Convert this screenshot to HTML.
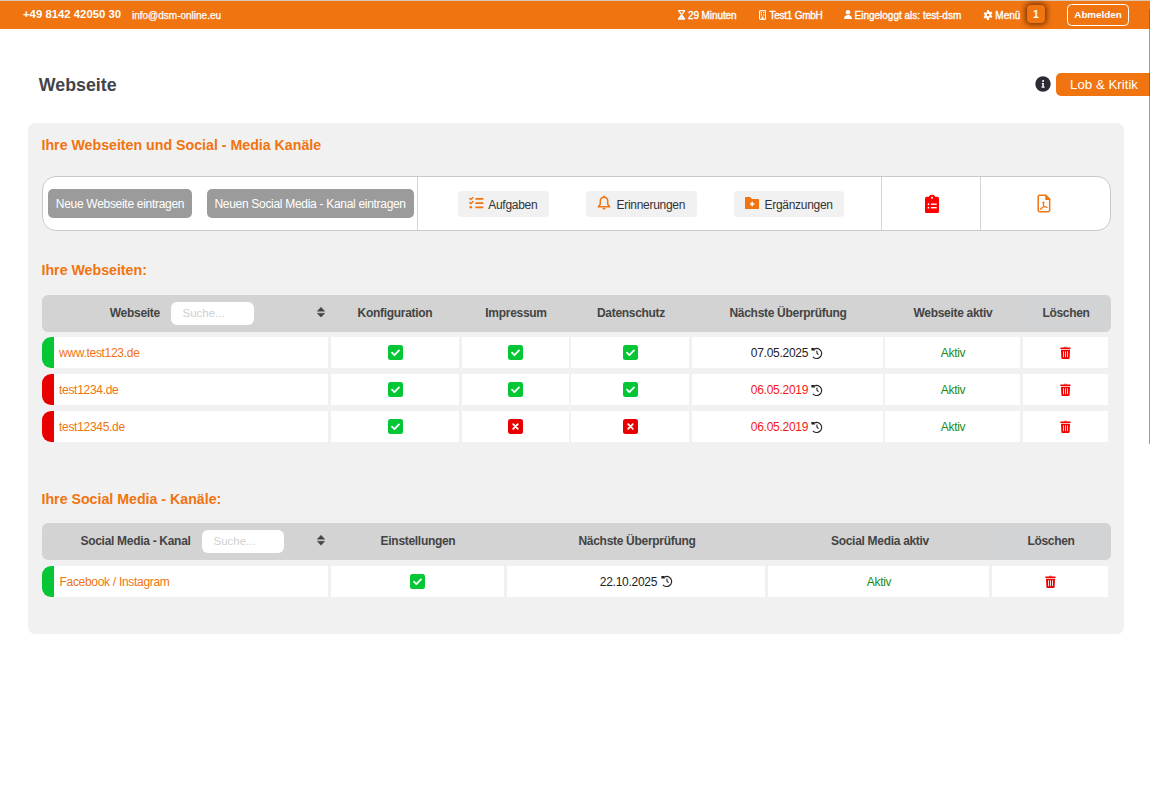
<!DOCTYPE html>
<html><head><meta charset="utf-8">
<style>
*{box-sizing:border-box}
html,body{margin:0;padding:0}
body{width:1150px;height:812px;overflow:hidden;background:#fff;position:relative;font-family:"Liberation Sans",sans-serif;}
.a{position:absolute}
.t{position:absolute;white-space:nowrap;line-height:20px;height:20px}
svg{display:block}
#topline{left:0;top:0;width:1150px;height:1px;background:#d8c8b8}
#hdr{left:0;top:1px;width:1150px;height:28px;background:#f07410}
.hw{color:#fff;font-size:10px;-webkit-text-stroke:0.35px #fff}
.panel{left:28px;top:123px;width:1096px;height:511px;background:#f1f1f1;border-radius:7px}
.or{color:#f07410;font-weight:bold;font-size:14.2px}
.tb{left:41.5px;top:176px;width:1069px;height:54.5px;background:#fff;border:1px solid #c9c9c9;border-radius:14px}
.gbtn{height:29px;top:189px;background:#9b9b9b;border-radius:5px;color:#fff;font-size:12px;letter-spacing:-0.3px;line-height:30px;text-align:center;white-space:nowrap}
.lbtn{height:26px;top:191px;background:#f1f1f1;border-radius:4px;color:#333;font-size:11.3px;line-height:26px;white-space:nowrap}
.vd{top:177px;width:1px;height:52.5px;background:#d4d4d4}
.th{left:41.5px;width:1069px;background:#d3d3d3;border-radius:6px;overflow:hidden}
.thl{background:#d2d3d5;top:0;bottom:0;right:0}
.hc{font-weight:bold;font-size:12px;letter-spacing:-0.3px;color:#444;text-align:center}
.srch{background:#fff;border-radius:6px;color:#cfcfcf;font-size:11.5px;line-height:23px;padding-left:12px;white-space:nowrap}
.cell{background:#fff;height:31px}
.bar{width:12px;height:31px;border-radius:9px 0 0 9px}
.lnk{color:#f07410;font-size:12px;letter-spacing:-0.3px}
.dt{color:#222;font-size:12px;letter-spacing:-0.27px}
.rd{color:#f31818}
.akt{color:#188c18;font-size:12px;letter-spacing:-0.3px;text-align:center}
</style></head><body>
<div id="topline" class="a"></div>
<div id="hdr" class="a"></div>
<div class="t" style="left:23px;top:4px;color:#fff;font-weight:bold;font-size:11.35px;line-height:20px">+49 8142 42050 30</div>
<div class="t" style="left:132px;top:5.7px;color:#fff;font-size:10px;-webkit-text-stroke:0.25px #fff">info@dsm-online.eu</div>

<!-- header right -->
<svg class="a" style="left:677.7px;top:10px" width="7.3" height="9.7" viewBox="0 0 7.6 9.7" preserveAspectRatio="none"><path d="M0 0h7.6v1.1L4.5 4.85 7.6 8.6v1.1H0V8.6L3.1 4.85 0 1.1z" fill="#fff"/><path d="M1.6 1.2h4.4L3.8 3.8z" fill="#f07410"/><circle cx="3.8" cy="7.2" r=".45" fill="#f07410"/></svg>
<div class="t hw" style="left:688px;top:5.5px;letter-spacing:-0.1px">29 Minuten</div>
<svg class="a" style="left:758.8px;top:10px" width="7.1" height="9.9" viewBox="0 0 8 10" preserveAspectRatio="none"><rect x="0.6" y="0.6" width="6.8" height="8.8" rx="1" fill="none" stroke="#fff" stroke-width="1.2"/><rect x="2" y="2" width="1.4" height="1.3" fill="#fff"/><rect x="4.6" y="2" width="1.4" height="1.3" fill="#fff"/><rect x="2" y="4.2" width="1.4" height="1.3" fill="#fff"/><rect x="4.6" y="4.2" width="1.4" height="1.3" fill="#fff"/><rect x="3" y="6.6" width="2" height="2.8" fill="#fff"/></svg>
<div class="t hw" style="left:769.5px;top:5.5px;letter-spacing:-0.25px">Test1 GmbH</div>
<svg class="a" style="left:844px;top:10px" width="8" height="9" viewBox="0 0 8 9"><circle cx="4" cy="2.3" r="2.3" fill="#fff"/><path d="M0 9c0-2.6 1.6-4 4-4s4 1.4 4 4z" fill="#fff"/></svg>
<div class="t hw" style="left:854.5px;top:5.5px">Eingeloggt als: test-dsm</div>
<svg class="a" style="left:983px;top:10px" width="10" height="10" viewBox="0 0 16 16"><path fill="#fff" fill-rule="evenodd" d="M9.5 0l.4 2.3c.6.2 1.1.5 1.5.9l2.2-.8 1.5 2.6-1.8 1.5c.1.6.1 1.2 0 1.8l1.8 1.5-1.5 2.6-2.2-.8c-.4.4-.9.7-1.5.9L9.5 16h-3l-.4-2.3c-.6-.2-1.1-.5-1.5-.9l-2.2.8L.9 11l1.8-1.5c-.1-.6-.1-1.2 0-1.8L.9 6.2 2.4 3.6l2.2.8c.4-.4.9-.7 1.5-.9L6.5 0zM8 5.9A2.1 2.1 0 1 0 8 10.1 2.1 2.1 0 1 0 8 5.9z"/></svg>
<div class="t hw" style="left:995.3px;top:5.5px">Menü</div>
<div class="a" style="left:1027px;top:5px;width:18px;height:18px;background:#f07410;border-radius:4px;box-shadow:0 0 5px 2px rgba(70,25,0,.65);color:#fff;font-weight:bold;font-size:10.5px;line-height:18px;text-align:center">1</div>
<div class="a" style="left:1067px;top:4px;width:62px;height:21.5px;border:1.6px solid #fff;border-radius:4.5px;color:#fff;font-weight:bold;font-size:9.8px;line-height:18px;padding-top:1.2px;text-align:center">Abmelden</div>

<!-- title -->
<div class="t" style="left:38.8px;top:74.6px;font-weight:bold;font-size:17.8px;color:#42444a">Webseite</div>
<svg class="a" style="left:1034.8px;top:75.8px" width="16" height="16" viewBox="0 0 16 16"><circle cx="8" cy="8" r="7.7" fill="#2b2c33"/><circle cx="8.1" cy="5" r="1.05" fill="#fff"/><path d="M6.8 7h2v3.5h.8v1.2H6.5v-1.2h.8V8.1h-.5z" fill="#fff"/></svg>
<div class="a" style="left:1056px;top:73px;width:94px;height:23px;background:#f07410;border-radius:5px 0 0 5px;color:#fff;font-size:13.3px;line-height:23px;padding-left:14px;white-space:nowrap">Lob &amp; Kritik</div>
<div class="a" style="left:1149px;top:9px;width:1px;height:435px;background:rgba(90,90,90,.6)"></div>

<!-- panel -->
<div class="a panel"></div>
<div class="t or" style="left:41.5px;top:135px">Ihre Webseiten und Social - Media Kanäle</div>

<!-- toolbar -->
<div class="a tb"></div>
<div class="a gbtn" style="left:48px;width:144px">Neue Webseite eintragen</div>
<div class="a gbtn" style="left:206.5px;width:207.2px">Neuen Social Media - Kanal eintragen</div>
<div class="a vd" style="left:417px"></div>
<div class="a lbtn" style="left:458px;width:91px"></div>
<div class="a lbtn" style="left:586px;width:110.5px"></div>
<div class="a lbtn" style="left:734px;width:110px"></div>
<div class="t" style="left:488.3px;top:194.5px;color:#333;font-size:12px;letter-spacing:-0.3px">Aufgaben</div>
<div class="t" style="left:616.6px;top:194.5px;color:#333;font-size:12px;letter-spacing:-0.3px">Erinnerungen</div>
<div class="t" style="left:764.6px;top:194.5px;color:#333;font-size:12px;letter-spacing:-0.3px">Ergänzungen</div>
<!-- list-check icon -->
<svg class="a" style="left:468.5px;top:197px" width="15" height="12" viewBox="0 0 15 12"><path d="M0.7 1.5l1.2 1.1 2-2.2M0.7 5.6l1.2 1.1 2-2.2" fill="none" stroke="#f07410" stroke-width="1.4" stroke-linecap="round" stroke-linejoin="round"/><circle cx="1.8" cy="10.2" r="1.3" fill="#f07410"/><rect x="6.3" y="0.9" width="8.2" height="1.8" rx=".6" fill="#f07410"/><rect x="6.3" y="5.2" width="8.2" height="1.8" rx=".6" fill="#f07410"/><rect x="6.3" y="9.4" width="8.2" height="1.8" rx=".6" fill="#f07410"/></svg>
<!-- bell -->
<svg class="a" style="left:596.8px;top:195.2px" width="14" height="15" viewBox="0 0 14 15"><rect x="6.2" y="0.4" width="1.6" height="2" rx=".7" fill="#f07410"/><path d="M7 2.2C4.8 2.2 3.3 3.9 3.3 6.1v3.2L1.3 11.7h11.4L10.7 9.3V6.1C10.7 3.9 9.2 2.2 7 2.2z" fill="none" stroke="#f07410" stroke-width="1.5" stroke-linejoin="round"/><ellipse cx="7" cy="13.6" rx="1.6" ry=".9" fill="#f07410"/></svg>
<!-- folder plus -->
<svg class="a" style="left:744.8px;top:196.9px" width="14" height="12.5" viewBox="0 0 14 12.5"><path d="M0 1C0 .4.4 0 1 0h4.2l1.8 1.9h6c.6 0 1 .4 1 1v8.6c0 .6-.4 1-1 1H1c-.6 0-1-.4-1-1z" fill="#f07410"/><path d="M7.2 4.8v4.4M5 7h4.4" stroke="#fff" stroke-width="1.5"/></svg>
<div class="a vd" style="left:881px"></div>
<div class="a vd" style="left:980px"></div>
<!-- clipboard list -->
<svg class="a" style="left:925px;top:194px" width="14" height="19" viewBox="0 0 14 19"><circle cx="7" cy="3.9" r="3.2" fill="#f00"/><rect x="0" y="2.8" width="14" height="16.2" rx="1.6" fill="#f00"/><circle cx="7" cy="3.8" r="1" fill="#fff"/><circle cx="3.5" cy="10.2" r=".85" fill="#fff"/><circle cx="3.5" cy="13.7" r=".85" fill="#fff"/><rect x="5.9" y="9.5" width="5.8" height="1.4" fill="#fff"/><rect x="5.9" y="13" width="5.8" height="1.4" fill="#fff"/></svg>
<!-- pdf -->
<svg class="a" style="left:1036.9px;top:194px" width="14" height="19" viewBox="0 0 14 19"><path d="M2.6 1.15h6.2l3.85 3.9v11.3c0 .8-.6 1.4-1.4 1.4H2.6c-.8 0-1.4-.6-1.4-1.4V2.55c0-.8.6-1.4 1.4-1.4z" fill="none" stroke="#f07410" stroke-width="1.5"/><path d="M8.3 1.1h.8l4.2 4.3v.6H8.3z" fill="#f07410"/><circle cx="6.4" cy="8.6" r="1.1" fill="#f07410"/><path d="M6.4 8.8l.3 3.6M6.7 12.4L3.2 15.4M6.7 12.4l3.4 0.9" fill="none" stroke="#f07410" stroke-width="1.3" stroke-linecap="round"/></svg>

<!-- Ihre Webseiten -->
<div class="t or" style="left:41.5px;top:260px">Ihre Webseiten:</div>
<div class="a th" style="top:295px;height:36.5px"><div class="a thl" style="left:981px"></div></div>
<div class="t hc" style="left:109.8px;top:303px">Webseite</div>
<div class="a srch" style="left:171px;top:302px;width:83px;height:23px;padding-left:11.5px">Suche...</div>
<svg class="a" style="left:317px;top:306.5px" width="8" height="10.5" viewBox="0 0 8 10.5"><path d="M4 0.2L7.8 4.3H0.2zM4 10.3L7.8 6.2H0.2z" fill="#444" stroke="#444" stroke-width=".4" stroke-linejoin="round"/></svg>
<div class="t hc" style="left:335px;width:120px;top:303px">Konfiguration</div>
<div class="t hc" style="left:456px;width:120px;top:303px">Impressum</div>
<div class="t hc" style="left:571px;width:120px;top:303px">Datenschutz</div>
<div class="t hc" style="left:688px;width:200px;top:303px">Nächste Überprüfung</div>
<div class="t hc" style="left:853px;width:200px;top:303px">Webseite aktiv</div>
<div class="t hc" style="left:1006px;width:120px;top:303px">Löschen</div>

<div class="a cell" style="left:42px;top:337px;width:286px;border-radius:9px 0 0 9px"></div>
<div class="a cell" style="left:331px;top:337px;width:128px"></div>
<div class="a cell" style="left:462px;top:337px;width:107px"></div>
<div class="a cell" style="left:571px;top:337px;width:118px"></div>
<div class="a cell" style="left:692px;top:337px;width:191px"></div>
<div class="a cell" style="left:885px;top:337px;width:135px"></div>
<div class="a cell" style="left:1023px;top:337px;width:85px"></div>
<div class="a bar" style="left:42px;top:337px;background:#05c634"></div>
<div class="t lnk" style="left:59px;top:343px">www.test123.de</div>
<svg class="a" style="left:387.5px;top:345px" width="15" height="15" viewBox="0 0 15 15"><rect width="15" height="15" rx="2.5" fill="#05c634"/><path d="M4 7.7l2.4 2.4L11 5.4" fill="none" stroke="#fff" stroke-width="1.8" stroke-linecap="round" stroke-linejoin="round"/></svg>
<svg class="a" style="left:507.5px;top:345px" width="15" height="15" viewBox="0 0 15 15"><rect width="15" height="15" rx="2.5" fill="#05c634"/><path d="M4 7.7l2.4 2.4L11 5.4" fill="none" stroke="#fff" stroke-width="1.8" stroke-linecap="round" stroke-linejoin="round"/></svg>
<svg class="a" style="left:622.5px;top:345px" width="15" height="15" viewBox="0 0 15 15"><rect width="15" height="15" rx="2.5" fill="#05c634"/><path d="M4 7.7l2.4 2.4L11 5.4" fill="none" stroke="#fff" stroke-width="1.8" stroke-linecap="round" stroke-linejoin="round"/></svg>
<div class="t dt" style="left:750.8px;top:343px">07.05.2025</div>
<svg class="a" style="left:811px;top:346.5px" width="12" height="12" viewBox="0 0 12 12"><path d="M3.4 1.9A5 5 0 1 1 1.9 9.8" fill="none" stroke="#222" stroke-width="1.25"/><path d="M0.4 0.9h2.6l1.2 2.6H0.4z" fill="#222"/><path d="M5.8 3.6l.3 2.9 1.5 1.1" fill="none" stroke="#222" stroke-width="1.1"/></svg>
<div class="t akt" style="left:903px;width:100px;top:343px">Aktiv</div>
<svg class="a" style="left:1060px;top:346px" width="11" height="13" viewBox="0 0 11 13"><path d="M3.6 1.6C3.9 1 4.5.8 5.5.8s1.6.2 1.9.8z" fill="#ee0000"/><rect x="0.3" y="1.5" width="10.3" height="1.5" rx=".6" fill="#ee0000"/><path d="M1 3.8h9l-.4 8.2c0 .5-.4.9-.9.9H2.3c-.5 0-.9-.4-.9-.9z" fill="#ee0000"/><path d="M3.5 5.3v5.9M5.5 5.3v5.9M7.5 5.3v5.9" stroke="#fff" stroke-width=".85"/></svg>
<div class="a cell" style="left:42px;top:374px;width:286px;border-radius:9px 0 0 9px"></div>
<div class="a cell" style="left:331px;top:374px;width:128px"></div>
<div class="a cell" style="left:462px;top:374px;width:107px"></div>
<div class="a cell" style="left:571px;top:374px;width:118px"></div>
<div class="a cell" style="left:692px;top:374px;width:191px"></div>
<div class="a cell" style="left:885px;top:374px;width:135px"></div>
<div class="a cell" style="left:1023px;top:374px;width:85px"></div>
<div class="a bar" style="left:42px;top:374px;background:#e80000"></div>
<div class="t lnk" style="left:59px;top:380px">test1234.de</div>
<svg class="a" style="left:387.5px;top:382px" width="15" height="15" viewBox="0 0 15 15"><rect width="15" height="15" rx="2.5" fill="#05c634"/><path d="M4 7.7l2.4 2.4L11 5.4" fill="none" stroke="#fff" stroke-width="1.8" stroke-linecap="round" stroke-linejoin="round"/></svg>
<svg class="a" style="left:507.5px;top:382px" width="15" height="15" viewBox="0 0 15 15"><rect width="15" height="15" rx="2.5" fill="#05c634"/><path d="M4 7.7l2.4 2.4L11 5.4" fill="none" stroke="#fff" stroke-width="1.8" stroke-linecap="round" stroke-linejoin="round"/></svg>
<svg class="a" style="left:622.5px;top:382px" width="15" height="15" viewBox="0 0 15 15"><rect width="15" height="15" rx="2.5" fill="#05c634"/><path d="M4 7.7l2.4 2.4L11 5.4" fill="none" stroke="#fff" stroke-width="1.8" stroke-linecap="round" stroke-linejoin="round"/></svg>
<div class="t dt rd" style="left:750.8px;top:380px">06.05.2019</div>
<svg class="a" style="left:811px;top:383.5px" width="12" height="12" viewBox="0 0 12 12"><path d="M3.4 1.9A5 5 0 1 1 1.9 9.8" fill="none" stroke="#222" stroke-width="1.25"/><path d="M0.4 0.9h2.6l1.2 2.6H0.4z" fill="#222"/><path d="M5.8 3.6l.3 2.9 1.5 1.1" fill="none" stroke="#222" stroke-width="1.1"/></svg>
<div class="t akt" style="left:903px;width:100px;top:380px">Aktiv</div>
<svg class="a" style="left:1060px;top:383px" width="11" height="13" viewBox="0 0 11 13"><path d="M3.6 1.6C3.9 1 4.5.8 5.5.8s1.6.2 1.9.8z" fill="#ee0000"/><rect x="0.3" y="1.5" width="10.3" height="1.5" rx=".6" fill="#ee0000"/><path d="M1 3.8h9l-.4 8.2c0 .5-.4.9-.9.9H2.3c-.5 0-.9-.4-.9-.9z" fill="#ee0000"/><path d="M3.5 5.3v5.9M5.5 5.3v5.9M7.5 5.3v5.9" stroke="#fff" stroke-width=".85"/></svg>
<div class="a cell" style="left:42px;top:411px;width:286px;border-radius:9px 0 0 9px"></div>
<div class="a cell" style="left:331px;top:411px;width:128px"></div>
<div class="a cell" style="left:462px;top:411px;width:107px"></div>
<div class="a cell" style="left:571px;top:411px;width:118px"></div>
<div class="a cell" style="left:692px;top:411px;width:191px"></div>
<div class="a cell" style="left:885px;top:411px;width:135px"></div>
<div class="a cell" style="left:1023px;top:411px;width:85px"></div>
<div class="a bar" style="left:42px;top:411px;background:#e80000"></div>
<div class="t lnk" style="left:59px;top:417px">test12345.de</div>
<svg class="a" style="left:387.5px;top:419px" width="15" height="15" viewBox="0 0 15 15"><rect width="15" height="15" rx="2.5" fill="#05c634"/><path d="M4 7.7l2.4 2.4L11 5.4" fill="none" stroke="#fff" stroke-width="1.8" stroke-linecap="round" stroke-linejoin="round"/></svg>
<svg class="a" style="left:507.5px;top:419px" width="15" height="15" viewBox="0 0 15 15"><rect width="15" height="15" rx="2.5" fill="#e80000"/><path d="M5.2 5.2l4.6 4.6M9.8 5.2l-4.6 4.6" fill="none" stroke="#fff" stroke-width="1.8" stroke-linecap="round"/></svg>
<svg class="a" style="left:622.5px;top:419px" width="15" height="15" viewBox="0 0 15 15"><rect width="15" height="15" rx="2.5" fill="#e80000"/><path d="M5.2 5.2l4.6 4.6M9.8 5.2l-4.6 4.6" fill="none" stroke="#fff" stroke-width="1.8" stroke-linecap="round"/></svg>
<div class="t dt rd" style="left:750.8px;top:417px">06.05.2019</div>
<svg class="a" style="left:811px;top:420.5px" width="12" height="12" viewBox="0 0 12 12"><path d="M3.4 1.9A5 5 0 1 1 1.9 9.8" fill="none" stroke="#222" stroke-width="1.25"/><path d="M0.4 0.9h2.6l1.2 2.6H0.4z" fill="#222"/><path d="M5.8 3.6l.3 2.9 1.5 1.1" fill="none" stroke="#222" stroke-width="1.1"/></svg>
<div class="t akt" style="left:903px;width:100px;top:417px">Aktiv</div>
<svg class="a" style="left:1060px;top:420px" width="11" height="13" viewBox="0 0 11 13"><path d="M3.6 1.6C3.9 1 4.5.8 5.5.8s1.6.2 1.9.8z" fill="#ee0000"/><rect x="0.3" y="1.5" width="10.3" height="1.5" rx=".6" fill="#ee0000"/><path d="M1 3.8h9l-.4 8.2c0 .5-.4.9-.9.9H2.3c-.5 0-.9-.4-.9-.9z" fill="#ee0000"/><path d="M3.5 5.3v5.9M5.5 5.3v5.9M7.5 5.3v5.9" stroke="#fff" stroke-width=".85"/></svg>

<!-- Social -->
<div class="t or" style="left:41.5px;top:489px">Ihre Social Media - Kanäle:</div>
<div class="a th" style="top:523px;height:36.5px"><div class="a thl" style="left:952px"></div></div>
<div class="t hc" style="left:80.5px;top:531px">Social Media - Kanal</div>
<div class="a srch" style="left:201.5px;top:530px;width:82.5px;height:22.5px;line-height:22.5px">Suche...</div>
<svg class="a" style="left:317px;top:535px" width="8" height="10.5" viewBox="0 0 8 10.5"><path d="M4 0.2L7.8 4.3H0.2zM4 10.3L7.8 6.2H0.2z" fill="#444" stroke="#444" stroke-width=".4" stroke-linejoin="round"/></svg>
<div class="t hc" style="left:358px;width:120px;top:531px">Einstellungen</div>
<div class="t hc" style="left:537px;width:200px;top:531px">Nächste Überprüfung</div>
<div class="t hc" style="left:780px;width:200px;top:531px">Social Media aktiv</div>
<div class="t hc" style="left:991px;width:120px;top:531px">Löschen</div>

<div class="a cell" style="left:42px;top:565.5px;width:286px;border-radius:9px 0 0 9px"></div>
<div class="a cell" style="left:331px;top:565.5px;width:173px"></div>
<div class="a cell" style="left:507px;top:565.5px;width:258px"></div>
<div class="a cell" style="left:768px;top:565.5px;width:221px"></div>
<div class="a cell" style="left:992px;top:565.5px;width:116px"></div>
<div class="a bar" style="left:42px;top:565.5px;background:#05c634"></div>
<div class="t lnk" style="left:59.5px;top:571.5px">Facebook / Instagram</div>
<svg class="a" style="left:410px;top:573.5px" width="15" height="15" viewBox="0 0 15 15"><rect width="15" height="15" rx="2.5" fill="#05c634"/><path d="M4 7.7l2.4 2.4L11 5.4" fill="none" stroke="#fff" stroke-width="1.8" stroke-linecap="round" stroke-linejoin="round"/></svg>
<div class="t dt" style="left:599.8px;top:571.5px">22.10.2025</div>
<svg class="a" style="left:660.5px;top:575.0px" width="12" height="12" viewBox="0 0 12 12"><path d="M3.4 1.9A5 5 0 1 1 1.9 9.8" fill="none" stroke="#222" stroke-width="1.25"/><path d="M0.4 0.9h2.6l1.2 2.6H0.4z" fill="#222"/><path d="M5.8 3.6l.3 2.9 1.5 1.1" fill="none" stroke="#222" stroke-width="1.1"/></svg>
<div class="t akt" style="left:829px;width:100px;top:571.5px">Aktiv</div>
<svg class="a" style="left:1044.5px;top:574.5px" width="11" height="13" viewBox="0 0 11 13"><path d="M3.6 1.6C3.9 1 4.5.8 5.5.8s1.6.2 1.9.8z" fill="#ee0000"/><rect x="0.3" y="1.5" width="10.3" height="1.5" rx=".6" fill="#ee0000"/><path d="M1 3.8h9l-.4 8.2c0 .5-.4.9-.9.9H2.3c-.5 0-.9-.4-.9-.9z" fill="#ee0000"/><path d="M3.5 5.3v5.9M5.5 5.3v5.9M7.5 5.3v5.9" stroke="#fff" stroke-width=".85"/></svg>
</body></html>
